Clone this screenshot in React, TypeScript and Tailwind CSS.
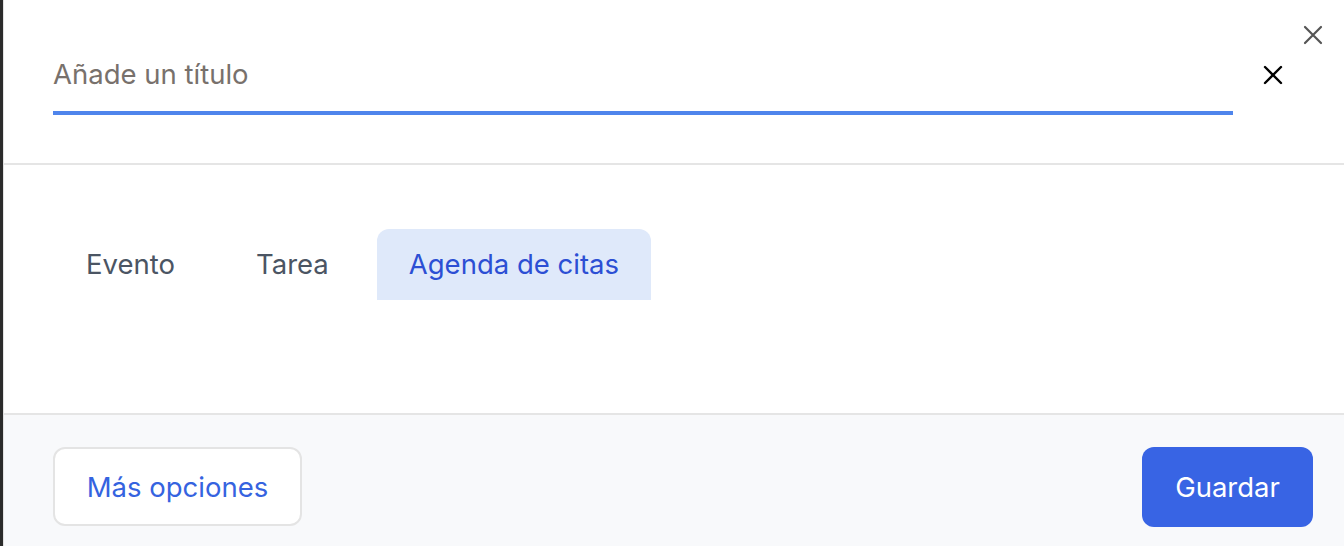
import React from 'react';

const XIcon: React.FC<{ className?: string; strokeWidth?: number }> = ({ className, strokeWidth = 2 }) => (
  <svg viewBox="0 0 20 20" className={className} fill="none" stroke="currentColor" strokeWidth={strokeWidth} strokeLinecap="round">
    <path d="M2 2 L18 18 M18 2 L2 18" />
  </svg>
);

const App: React.FC = () => {
  const tabs: { name: string; active?: boolean }[] = [
    { name: 'Evento' },
    { name: 'Tarea' },
    { name: 'Agenda de citas', active: true },
  ];

  return (
    <div className="flex h-[546px] w-[1344px] overflow-hidden bg-white font-['Inter',sans-serif]">
      <div className="w-[3px] bg-[#2b2b2b]" />
      <div className="w-px bg-[#e2e2e2]" />
      <div className="relative flex flex-1 flex-col">
        <button className="absolute right-[21px] top-[25px] h-5 w-5 text-[#555555]">
          <XIcon className="h-5 w-5" strokeWidth={2.2} />
        </button>

        {/* title */}
        <div className="flex h-[163px] items-start pl-[49px] pt-[55px]">
          <div className="w-[1180px] border-b-4 border-[#4f85ec] pb-[16px]">
            <input
              placeholder="Añade un título"
              className="h-10 w-full bg-transparent text-[27.5px] text-[#1f2937] outline-none placeholder:text-[#78716c]"
            />
          </div>
          <button className="ml-[30px] mt-[10px] h-5 w-5 text-black">
            <XIcon className="h-5 w-5" strokeWidth={2.4} />
          </button>
        </div>
        <div className="h-[2px] bg-[#e5e5e5]" />

        {/* tabs */}
        <div className="flex h-[248px] items-start gap-[15px] pl-[49px] pt-[64px]">
          {tabs.map((tab) => (
            <button
              key={tab.name}
              className={
                tab.active
                  ? 'flex h-[71px] items-center rounded-t-[12px] bg-[#dfe9fa] px-[32px] text-[27.5px] text-[#2c4fd4]'
                  : 'flex h-[71px] items-center px-[33px] text-[27.5px] text-[#4b5563]'
              }
            >
              {tab.name}
            </button>
          ))}
        </div>
        <div className="h-[2px] bg-[#e5e5e5]" />

        {/* footer */}
        <div className="flex flex-1 items-start justify-between bg-[#f8f9fb] pl-[49px] pr-[31px] pt-8">
          <button className="flex h-[79px] w-[249px] items-center justify-center rounded-[12px] border-2 border-[#e4e4e4] bg-white pt-[2px] text-[27.5px] text-[#3563e0]">
            Más opciones
          </button>
          <button className="flex h-[80px] w-[171px] items-center justify-center rounded-[12px] bg-[#3864e4] pt-[2px] text-[27.5px] text-white">
            Guardar
          </button>
        </div>
      </div>
    </div>
  );
};

export default App;
